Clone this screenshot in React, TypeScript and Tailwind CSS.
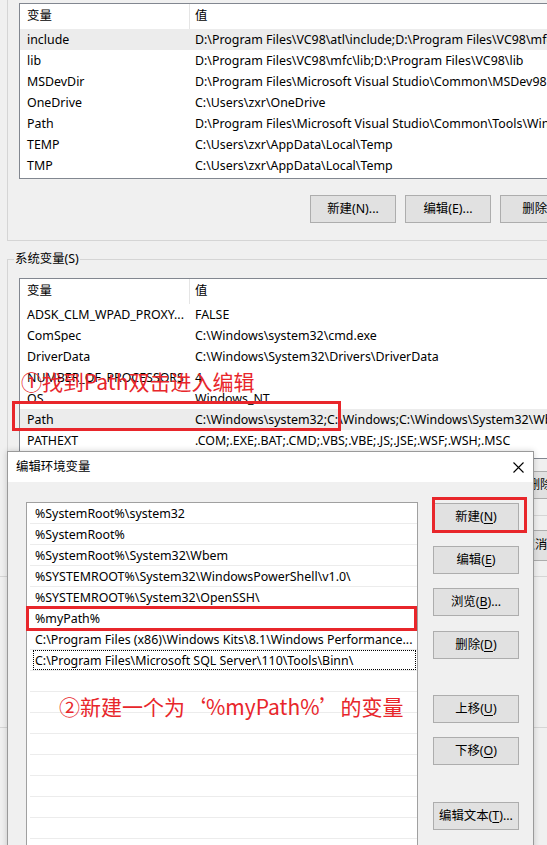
import type { ReactNode } from 'react'

type Row = [string, string]

const userVars: Row[] = [
  ['include', 'D:\\Program Files\\VC98\\atl\\include;D:\\Program Files\\VC98\\mfc\\include;D:\\Program Files\\VC98\\include'],
  ['lib', 'D:\\Program Files\\VC98\\mfc\\lib;D:\\Program Files\\VC98\\lib'],
  ['MSDevDir', 'D:\\Program Files\\Microsoft Visual Studio\\Common\\MSDev98'],
  ['OneDrive', 'C:\\Users\\zxr\\OneDrive'],
  ['Path', 'D:\\Program Files\\Microsoft Visual Studio\\Common\\Tools\\WinNT;D:\\Program Files'],
  ['TEMP', 'C:\\Users\\zxr\\AppData\\Local\\Temp'],
  ['TMP', 'C:\\Users\\zxr\\AppData\\Local\\Temp'],
]

const systemVars: Row[] = [
  ['ADSK_CLM_WPAD_PROXY...', 'FALSE'],
  ['ComSpec', 'C:\\Windows\\system32\\cmd.exe'],
  ['DriverData', 'C:\\Windows\\System32\\Drivers\\DriverData'],
  ['NUMBER_OF_PROCESSORS', '4'],
  ['OS', 'Windows_NT'],
  ['Path', 'C:\\Windows\\system32;C:\\Windows;C:\\Windows\\System32\\Wbem;C:\\Windows'],
  ['PATHEXT', '.COM;.EXE;.BAT;.CMD;.VBS;.VBE;.JS;.JSE;.WSF;.WSH;.MSC'],
  ['PROCESSOR_ARCHITECTURE', 'AMD64'],
]

const pathItems = [
  '%SystemRoot%\\system32',
  '%SystemRoot%',
  '%SystemRoot%\\System32\\Wbem',
  '%SYSTEMROOT%\\System32\\WindowsPowerShell\\v1.0\\',
  '%SYSTEMROOT%\\System32\\OpenSSH\\',
  '%myPath%',
  'C:\\Program Files (x86)\\Windows Kits\\8.1\\Windows Performance...',
  'C:\\Program Files\\Microsoft SQL Server\\110\\Tools\\Binn\\',
  '', '', '', '', '', '', '', '', '',
]

function Btn({ children, className = '' }: { children: ReactNode; className?: string }) {
  return (
    <div
      className={`flex h-[28px] w-[86px] shrink-0 items-center justify-center whitespace-nowrap border border-[#adadad] bg-[#e1e1e1] ${className}`}
    >
      {children}
    </div>
  )
}

function Key({ k }: { k: string }) {
  return <span className="underline underline-offset-[2px]">{k}</span>
}

function VarList({ rows, selected, height }: { rows: Row[]; selected: number; height: string }) {
  return (
    <div className={`w-[620px] overflow-hidden border border-[#828790] bg-white ${height}`}>
      <div className="flex h-[25px] items-center">
        <div className="flex h-full w-[170px] shrink-0 items-center border-r border-[#e5e5e5] pl-[7px]">变量</div>
        <div className="pl-[5px]">值</div>
      </div>
      {rows.map(([name, value], i) => (
        <div key={i} className={`flex h-[21px] items-center pt-[1px] ${i === selected ? 'bg-[#ececec]' : ''}`}>
          <div className="w-[170px] shrink-0 overflow-hidden whitespace-nowrap pl-[7px]">{name}</div>
          <div className="whitespace-nowrap pl-[5px]">{value}</div>
        </div>
      ))}
    </div>
  )
}

export default function App() {
  return (
    <div className="relative h-[845px] w-[547px] overflow-hidden bg-[#f0f0f0] font-['Noto_Sans','Noto_Sans_CJK_SC',sans-serif] text-[12.4px] leading-none text-black">
      {/* 用户变量（上半部分被裁掉） */}
      <div className="ml-[7px] h-[241px] w-[620px] border-b border-l border-[#d5d5d5] pl-[11px] pt-[3px]">
        <VarList rows={userVars} selected={0} height="h-[176px]" />
        <div className="ml-[291px] mt-[16px] flex gap-[9px]">
          <Btn>新建(N)...</Btn>
          <Btn>编辑(E)...</Btn>
          <Btn>删除(D)</Btn>
        </div>
      </div>

      {/* 系统变量 */}
      <div className="ml-[7px] mt-[18px] h-[257px] w-[620px] border-b border-l border-t border-[#d5d5d5] pl-[11px]">
        <div className="-ml-[5px] -mt-[9px] flex h-[17px] w-fit items-center bg-[#f0f0f0] px-[1px]">系统变量(S)</div>
        <div className="mt-[10px]">
          <VarList rows={systemVars} selected={5} height="h-[181px]" />
        </div>
        <div className="ml-[295px] mt-[12px] flex gap-[9px]">
          <Btn>新建(W)...</Btn>
          <Btn>编辑(I)...</Btn>
          <Btn>删除(L)</Btn>
        </div>
      </div>
      <div className="ml-[398px] mt-[14px] flex gap-[8px]">
        <Btn className="h-[31px]">确定</Btn>
        <Btn className="h-[31px]">取消</Btn>
      </div>
      <div className="mt-[15px] h-px w-full bg-[#d5d5d5]" />
      <div className="mt-[150px] h-px w-full bg-[#d5d5d5]" />

      {/* 标注 ① */}
      <div className="absolute left-[21px] top-[369px] whitespace-nowrap font-['Noto_Sans_CJK_SC',sans-serif] text-[21px] leading-[24px] text-[#e8262b]">
        ①找到Path双击进入编辑
      </div>
      <div className="absolute left-[12px] top-[401px] h-[30px] w-[329px] border-[3px] border-[#e8262b]" />

      {/* 编辑环境变量 对话框 */}
      <div className="absolute left-[7px] top-[451px] h-[420px] w-[527px] border border-[#9a9a9a] bg-[#f0f0f0] shadow-[0_0_6px_rgba(0,0,0,0.18)]">
        <div className="flex h-[30px] items-center justify-between bg-white pl-[8px] pr-[9px]">
          <span>编辑环境变量</span>
          <svg width="11" height="11" viewBox="0 0 11 11">
            <path d="M0.5 0.5L10.5 10.5M10.5 0.5L0.5 10.5" stroke="#000" strokeWidth="1.1" fill="none" />
          </svg>
        </div>
        <div className="flex gap-[15px] pl-[18px] pt-[20px]">
          <div className="h-[400px] w-[392px] shrink-0 border border-[#a0a0a0] bg-white">
            {pathItems.map((item, i) => (
              <div key={i} className="ml-[3px] flex h-[21px] items-stretch border-b border-[#ececec]">
                <div
                  className={`ml-[3px] mr-[1px] flex flex-1 items-center whitespace-nowrap pl-[1px] pt-[2px] ${
                    i === 7 ? 'border border-dotted border-black' : 'border border-transparent'
                  }`}
                >
                  {item}
                </div>
              </div>
            ))}
          </div>
          <div className="flex flex-col pt-[1px]">
            <Btn>
              新建(<Key k="N" />)
            </Btn>
            <Btn className="mt-[15px]">
              编辑(<Key k="E" />)
            </Btn>
            <Btn className="mt-[14px]">
              浏览(<Key k="B" />)...
            </Btn>
            <Btn className="mt-[15px]">
              删除(<Key k="D" />)
            </Btn>
            <Btn className="mt-[36px]">
              上移(<Key k="U" />)
            </Btn>
            <Btn className="mt-[14px]">
              下移(<Key k="O" />)
            </Btn>
            <Btn className="mt-[37px]">
              编辑文本(<Key k="T" />)...
            </Btn>
          </div>
        </div>
      </div>

      {/* 标注 ② */}
      <div className="absolute left-[26px] top-[606px] h-[25px] w-[391px] border-[3px] border-[#e8262b]" />
      <div className="absolute left-[432px] top-[497px] h-[36px] w-[95px] border-[3px] border-[#e8262b]" />
      <div className="absolute left-[59px] top-[694px] whitespace-nowrap font-['Noto_Sans_CJK_SC',sans-serif] text-[21px] leading-[24px] text-[#e8262b]">
        ②新建一个为‘%myPath%’的变量
      </div>
    </div>
  )
}
